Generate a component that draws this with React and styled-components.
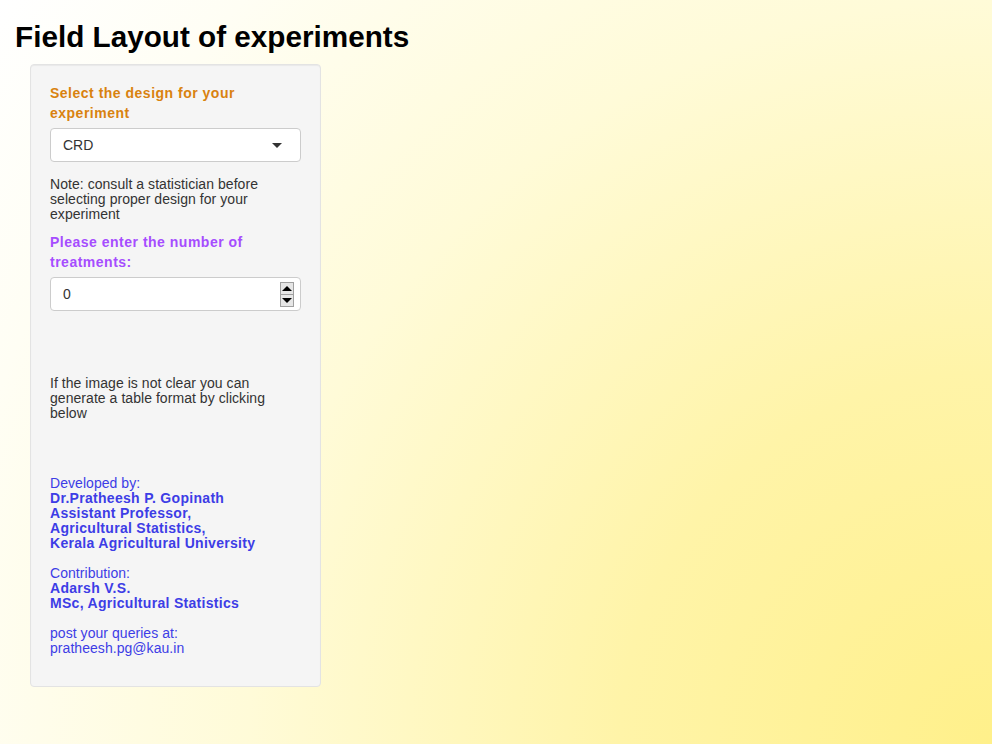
import React from 'react';
import styled, { createGlobalStyle } from 'styled-components';

const GlobalStyle = createGlobalStyle`
  html, body {
    margin: 0;
    padding: 0;
    min-height: 100%;
  }
  body {
    font-family: "Liberation Sans", Arial, sans-serif;
    font-size: 14px;
    color: #333;
    min-height: 744px;
    background: radial-gradient(circle farthest-corner at 100% 100%, #fff08a 0%, #fff4a8 30%, #fffbd8 60%, #fffef4 85%, #ffffff 100%);
  }
`;

const Page = styled.div`
  padding: 0 15px;
`;

const Title = styled.h2`
  font-size: 29.7px;
  font-weight: bold;
  color: #000;
  margin: 0;
  padding-top: 20px;
  line-height: 33px;
  height: 44px;
`;

const Well = styled.div`
  width: 251px;
  margin-left: 15px;
  padding: 18px 19px 30px;
  background: #f5f5f5;
  border: 1px solid #e3e3e3;
  border-radius: 4px;
  box-shadow: inset 0 1px 1px rgba(0, 0, 0, 0.05);
`;

const Label = styled.div`
  font-weight: bold;
  font-size: 14px;
  line-height: 20px;
  color: ${p => p.color};
  margin: ${p => p.m || '0'} 0 5px;
  letter-spacing: 0.5px;
`;

const Box = styled.div`
  display: flex;
  align-items: center;
  justify-content: space-between;
  height: 32px;
  border: 1px solid #ccc;
  border-radius: 4px;
  background: #fff;
  padding: 0 6px 0 12px;
  font-size: 14px;
  color: #333;
`;

const Caret = styled.span`
  width: 0;
  height: 0;
  border-left: 5px solid transparent;
  border-right: 5px solid transparent;
  border-top: 5px solid #333;
  margin-right: 12px;
`;

const Spinner = styled.div`
  display: flex;
  flex-direction: column;
  border: 1px solid #a0a0a0;
  background: #e6e6e6;
`;

const SpinBtn = styled.div`
  width: 12px;
  height: 11px;
  display: flex;
  align-items: center;
  justify-content: center;
  & + & {
    border-top: 1px solid #a0a0a0;
  }
`;

const Tri = styled.span`
  width: 0;
  height: 0;
  border-left: 5px solid transparent;
  border-right: 5px solid transparent;
  ${p => (p.up ? 'border-bottom: 5px solid #000;' : 'border-top: 5px solid #000;')}
`;

const Note = styled.p`
  margin: ${p => p.m || '0'};
  font-size: 14px;
  line-height: 15px;
  letter-spacing: 0.05px;
  color: ${p => p.color || '#333'};
`;

const Strong = styled.b`
  font-weight: bold;
  letter-spacing: 0.3px;
`;

export default function App() {
  return (
    <>
      <GlobalStyle />
      <Page>
        <Title>Field Layout of experiments</Title>
        <Well>
          <Label color="#d9820f">Select the design for your experiment</Label>
          <Box>
            <span>CRD</span>
            <Caret />
          </Box>
          <Note m="15px 0 0">
            Note: consult a statistician before selecting proper design for your experiment
          </Note>
          <Label color="#a64dff" m="10px">
            Please enter the number of treatments:
          </Label>
          <Box>
            <span>0</span>
            <Spinner>
              <SpinBtn><Tri up /></SpinBtn>
              <SpinBtn><Tri /></SpinBtn>
            </Spinner>
          </Box>
          <Note m="65px 0 0">
            If the image is not clear you can generate a table format by clicking below
          </Note>
          <Note m="55px 0 0" color="#3d3de6">
            Developed by:<br />
            <Strong>Dr.Pratheesh P. Gopinath<br />
            Assistant Professor,<br />
            Agricultural Statistics,<br />
            Kerala Agricultural University</Strong>
          </Note>
          <Note m="15px 0 0" color="#3d3de6">
            Contribution:<br />
            <Strong>Adarsh V.S.<br />
            MSc, Agricultural Statistics</Strong>
          </Note>
          <Note m="15px 0 0" color="#3d3de6">
            post your queries at:<br />
            pratheesh.pg@kau.in
          </Note>
        </Well>
      </Page>
    </>
  );
}
